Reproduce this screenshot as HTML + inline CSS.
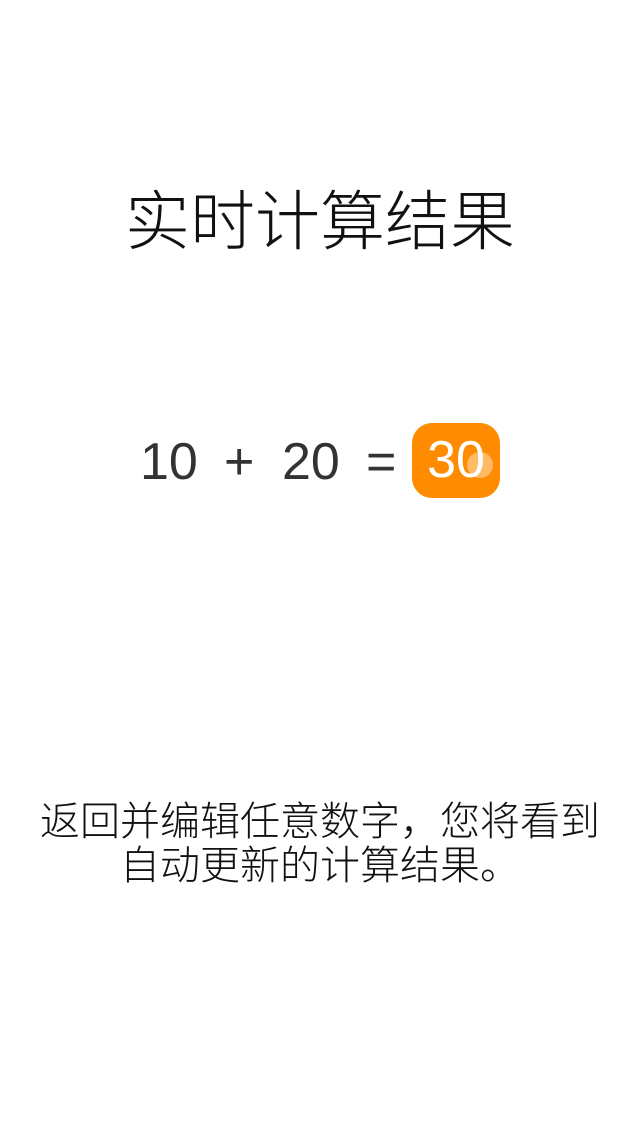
<!DOCTYPE html>
<html><head><meta charset="utf-8"><style>
body{margin:0;width:640px;height:1136px;background:#fff;position:relative;overflow:hidden;font-family:"Liberation Sans","Noto Sans CJK SC",sans-serif;color:#111}
.t{position:absolute;left:0;width:640px;text-align:center;font-weight:300}
.eq{position:absolute;top:430px;font-size:52px;font-weight:300;color:#333;line-height:64px;font-family:"Liberation Sans",sans-serif}
.box{position:absolute;left:412px;top:423px;width:88px;height:75px;background:#ff8c00;border-radius:20px;color:#fff;font-size:52px;font-weight:300;line-height:75px;text-align:center}
.dot{position:absolute;left:467px;top:452px;width:26px;height:26px;border-radius:50%;background:rgba(255,255,255,.4)}
</style></head><body>
<div class="t" style="top:184px;font-size:65px;line-height:76px;">实时计算结果</div>
<div class="eq" style="left:140px;">10</div>
<div class="eq" style="left:224px;">+</div>
<div class="eq" style="left:282px;">20</div>
<div class="eq" style="left:366px;">=</div>
<div class="box">30</div>
<div class="dot"></div>
<div class="t" style="top:800px;font-size:40px;line-height:44px;">返回并编辑任意数字，您将看到<br>自动更新的计算结果。</div>
</body></html>
